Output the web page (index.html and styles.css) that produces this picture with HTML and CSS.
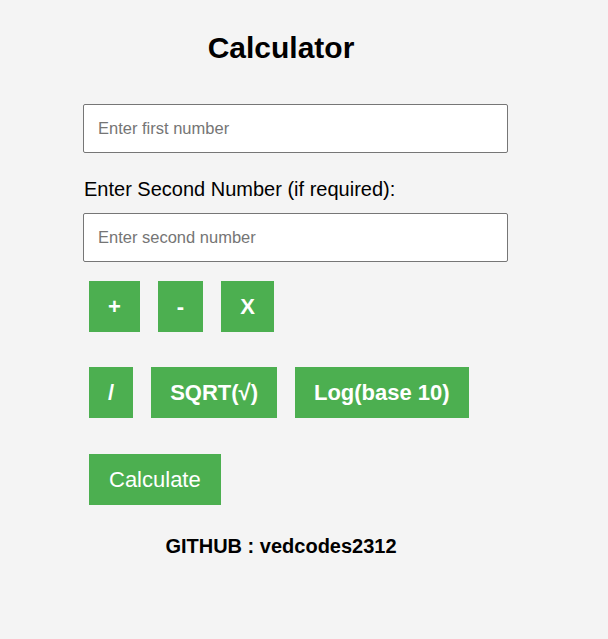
FILE: index.html
```html
<!DOCTYPE html>
<html>
<head>
<meta charset="utf-8">
<link rel="stylesheet" href="styles.css">
</head>
<body>
<div class="calc">
  <h1 class="title">Calculator</h1>
  <input class="field" type="text" placeholder="Enter first number">
  <label class="label">Enter Second Number (if required):</label>
  <input class="field" type="text" placeholder="Enter second number">
  <div class="row">
    <button class="btn">+</button>
    <button class="btn">-</button>
    <button class="btn">X</button>
  </div>
  <div class="row">
    <button class="btn">/</button>
    <button class="btn">SQRT(√)</button>
    <button class="btn">Log(base 10)</button>
  </div>
  <div class="row row-last">
    <button class="btn calc-btn">Calculate</button>
  </div>
  <p class="github">GITHUB : vedcodes2312</p>
</div>
</body>
</html>
```
FILE: styles.css
```css
html, body {
  margin: 0;
  padding: 0;
  background: #f4f4f4;
  font-family: "Liberation Sans", Arial, sans-serif;
}
.calc {
  width: 396px;
  margin-left: 83px;
  padding-top: 30px;
  display: flex;
  flex-direction: column;
  align-items: flex-start;
}
.title {
  align-self: center;
  margin: 0 0 38px 0;
  font-size: 30px;
  font-weight: bold;
  color: #000;
  line-height: 36px;
}
.field {
  box-sizing: border-box;
  width: 425px;
  height: 49px;
  margin: 0;
  padding: 0 14px;
  border: 1px solid #767676;
  border-radius: 2px;
  background: #fff;
  font-family: "Liberation Sans", Arial, sans-serif;
  font-size: 16.5px;
  color: #000;
}
.field::placeholder {
  color: #757575;
}
.label {
  margin: 25px 0 12px 1px;
  font-size: 20px;
  line-height: 23px;
  color: #000;
}
.row {
  display: flex;
  gap: 18px;
  margin-left: 6px;
  margin-top: 19px;
}
.row + .row {
  margin-top: 35px;
}
.row.row-last {
  margin-top: 36px;
}
.btn {
  height: 51px;
  padding: 0 19px;
  border: none;
  background: #4caf50;
  color: #fff;
  font-family: "Liberation Sans", Arial, sans-serif;
  font-size: 22px;
  font-weight: bold;
}
.calc-btn {
  padding: 0 20px;
  font-size: 22px;
  font-weight: normal;
}
.github {
  align-self: center;
  margin: 30px 0 0 0;
  font-size: 20px;
  font-weight: bold;
  color: #000;
}
```
